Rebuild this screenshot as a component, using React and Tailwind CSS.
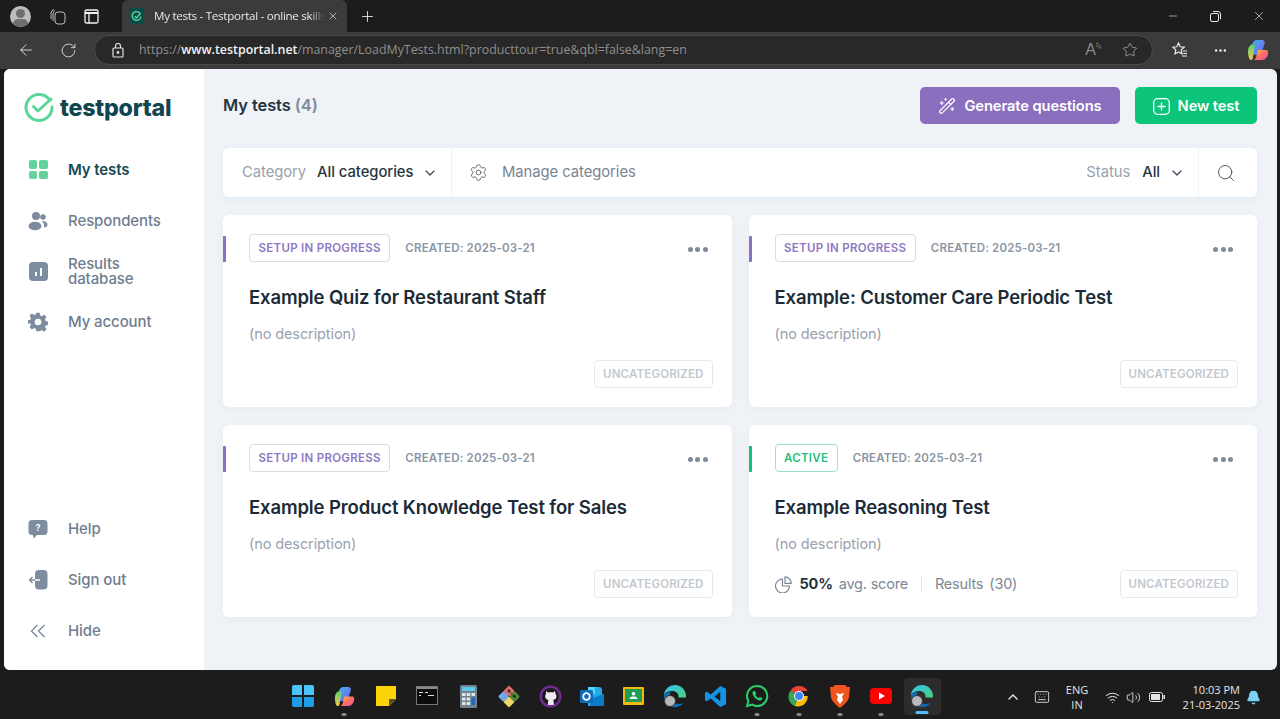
import React from "react";
import { ChevronDown, Search, Settings, Plus, ArrowLeft, RotateCw, Star, MoreHorizontal, X, Minus, WandSparkles, ChevronUp, Wifi, Volume2, Bell, Keyboard } from "lucide-react";

const Tile = ({ children, w = 30 }) => (
  <div className="flex items-center justify-center shrink-0 h-[30px]" style={{ width: w }}>{children}</div>
);

function Dot({ on }) {
  return <div className={on ? "absolute bottom-[1px] left-1/2 -translate-x-1/2 w-[5px] h-[3px] rounded bg-[#8a8a8a]" : "hidden"} />;
}

function CopilotIcon({ size = 24 }) {
  return (
    <svg width={size} height={size} viewBox="0 0 24 24">
      <defs>
        <linearGradient id="cpa" x1="0" y1="0" x2="1" y2="1"><stop offset="0" stopColor="#3fb4f0" /><stop offset="1" stopColor="#7c5ce8" /></linearGradient>
        <linearGradient id="cpb" x1="0" y1="0" x2="1" y2="1"><stop offset="0" stopColor="#ffc53d" /><stop offset="0.5" stopColor="#ff6f61" /><stop offset="1" stopColor="#e84fb0" /></linearGradient>
        <linearGradient id="cpc" x1="0" y1="0" x2="0" y2="1"><stop offset="0" stopColor="#52d273" /><stop offset="1" stopColor="#f7c948" /></linearGradient>
      </defs>
      <path d="M6 7c.6-3 2.500-5 5-5h5c2 0 3 1.600 2.600 3.400L15 17H9.500C6 17 5 13 6 7z" fill="url(#cpa)" />
      <path d="M2 13c0-3 1.500-6 4-6.600L9 7 7 19c-.3 2-1 3-2 3-2 0-3-5-3-9z" fill="url(#cpc)" />
      <path d="M12 12h8c2 0 2.500 2 2 4-.8 3.500-3 6-6 6H8c1.500-1 2.200-2.500 2.600-4.500z" fill="url(#cpb)" />
    </svg>
  );
}

function EdgeIcon({ avatar }) {
  return (
    <div className="relative w-[24px] h-[24px]">
      <svg width="24" height="24" viewBox="0 0 24 24">
        <defs>
          <linearGradient id="eg1" x1="0" y1="0" x2="1" y2="1"><stop offset="0" stopColor="#35c1f1" /><stop offset="1" stopColor="#46d27a" /></linearGradient>
        </defs>
        <path d="M12 1C6 1 1.500 5.500 1 11c2-3 5.500-4.500 9-4 3.500.4 6 3 5.500 6.500H23c.5-7-4.500-12.500-11-12.500z" fill="url(#eg1)" />
        <path d="M1 11c-.5 6 3 11 9 12 4 .6 8-.7 11-4-4 1.500-9 1.500-12-1.500C6 15 6 11 8 8 5 7.800 2.500 9 1 11z" fill="#0c6cb8" />
      </svg>
      {avatar && <div className="absolute left-[1px] bottom-[1px] w-[12px] h-[12px] rounded-full bg-[#b9b9b9] border border-[#333]" />}
    </div>
  );
}

function TaskIcons() {
  return (
    <div className="flex items-center gap-[11.3px] h-full">
      <Tile>
        <div className="grid grid-cols-2 gap-[1.500px] w-[22px] h-[22px]">
          <div className="bg-[#4cc2ff] rounded-tl-[2px]" /><div className="bg-[#4cc2ff] rounded-tr-[2px]" /><div className="bg-[#1e9de6] rounded-bl-[2px]" /><div className="bg-[#1e9de6] rounded-br-[2px]" />
        </div>
      </Tile>
      <div className="relative h-full flex items-center"><Tile><CopilotIcon size={23} /></Tile><Dot on /></div>
      <Tile>
        <svg width="22" height="22" viewBox="0 0 22 22"><path d="M1 1h20v13l-7 7H1z" fill="#fdd40a" /><path d="M21 14h-7v7z" fill="#5e5320" /></svg>
      </Tile>
      <Tile>
        <svg width="22" height="20" viewBox="0 0 22 20"><rect x="0.500" y="0.500" width="21" height="18" fill="#0c0c0c" stroke="#777" /><rect x="1" y="1" width="20" height="2" fill="#8a8a8a" /><path d="M3 6h4v1H3zM9 6h3v1H9zM3 9h2v1H3zM12 9h6v1h-6z" fill="#ddd" /></svg>
      </Tile>
      <Tile>
        <svg width="17" height="23" viewBox="0 0 17 23"><rect width="17" height="23" rx="1.500" fill="#70818f" /><rect x="2" y="2" width="13" height="4" fill="#5cc8ea" /><g fill="#dfe6ea"><rect x="2" y="8" width="3.500" height="3" /><rect x="6.700" y="8" width="3.500" height="3" /><rect x="2" y="12.500" width="3.500" height="3" /><rect x="6.700" y="12.500" width="3.500" height="3" /><rect x="2" y="17" width="3.500" height="3" /><rect x="6.700" y="17" width="3.500" height="3" /></g><rect x="11.500" y="12.500" width="3.500" height="7.500" fill="#1e6bb8" /><rect x="11.500" y="8" width="3.500" height="3" fill="#dfe6ea" /></svg>
      </Tile>
      <Tile>
        <svg width="24" height="24" viewBox="0 0 24 24"><rect x="2.500" y="8.500" width="8" height="8" rx="1.500" transform="rotate(45 6.500 12.500)" fill="#6ea8e8" /><rect x="8" y="14" width="8" height="8" rx="1.500" transform="rotate(45 12 18)" fill="#f0d667" /><rect x="13.500" y="8.500" width="8" height="8" rx="1.500" transform="rotate(45 17.500 12.500)" fill="#4f8a3a" /><rect x="8" y="3" width="8" height="8" rx="1.500" transform="rotate(45 12 7)" fill="#e06c6c" /><circle cx="12" cy="7" r="1.400" fill="#222" /><circle cx="17.500" cy="12.500" r="1.400" fill="#222" /><path d="M12 7l5.500 5.500" stroke="#222" strokeWidth=".8" /></svg>
      </Tile>
      <Tile>
        <svg width="23" height="23" viewBox="0 0 23 23"><circle cx="11.500" cy="11.500" r="11" fill="#6f2c91" /><circle cx="11.500" cy="11.500" r="8.500" fill="#1b1b1b" /><path d="M7 6l2 1.500c1.500-.4 3.500-.4 5 0L16 6l.6 3c.8 1 1 2.200.7 3.500-.4 1.500-1.800 2.300-3.300 2.500.5.500.7 1 .7 1.700V20H9v-3.300C9 16 9.200 15.500 9.700 15c-1.500-.2-3-1-3.300-2.500C6 11.200 6.300 10 7 9z" fill="#f3eaf7" /></svg>
      </Tile>
      <Tile>
        <svg width="24" height="24" viewBox="0 0 24 24"><path d="M8 3h11a3 3 0 013 3v4l2 1.500V20a2 2 0 01-2 2H8z" fill="#28a8ea" /><path d="M8 3h7v7H8z" fill="#50d9ff" /><path d="M12 14l12-4v10a2 2 0 01-2 2H10z" fill="#0a7dc9" /><rect x="0" y="6" width="13" height="13" rx="1.500" fill="#0f6cbd" /><circle cx="6.500" cy="12.500" r="3.300" fill="none" stroke="#fff" strokeWidth="1.800" /></svg>
      </Tile>
      <Tile>
        <svg width="21" height="18" viewBox="0 0 21 18"><rect width="21" height="18" rx="1" fill="#f2b90f" /><rect x="2" y="2" width="17" height="13" fill="#1f9d55" /><circle cx="10.500" cy="6.800" r="1.800" fill="#fff" /><path d="M6.500 12c.5-2 2-2.500 4-2.500s3.500.5 4 2.500z" fill="#fff" /></svg>
      </Tile>
      <Tile><EdgeIcon avatar /></Tile>
      <Tile>
        <svg width="23" height="23" viewBox="0 0 24 24"><path d="M17 1l6 3v16l-6 3L7 14l-4 3-2-1V8l2-1 4 3zM17 7l-6 5 6 5z" fill="#1492e6" /></svg>
      </Tile>
      <div className="relative h-full flex items-center"><Tile>
        <svg width="24" height="24" viewBox="0 0 24 24" fill="none"><path d="M12 2a10 10 0 00-8.600 15L2 22l5.200-1.400A10 10 0 1012 2z" stroke="#25d366" strokeWidth="2" /><path d="M8.500 7c-1 .8-1.300 2-.7 3.500 1 2.500 3.200 4.700 5.700 5.700 1.500.6 2.700.3 3.500-.7l.5-1.300-2.700-1.300-1 1.200c-1.500-.6-2.800-1.900-3.500-3.400l1-1L10 7z" fill="#25d366" /></svg>
      </Tile><Dot on /></div>
      <div className="relative h-full flex items-center"><Tile>
        <svg width="24" height="24" viewBox="0 0 24 24"><path d="M12 12L3.300 7A10 10 0 0120.700 7H12z" fill="#ea4335" /><path d="M12 12l-4.300 10A10 10 0 013.300 7z" fill="#34a853" /><path d="M12 12h8.700a10 10 0 01-13 10z" fill="#fbbc05" /><circle cx="12" cy="12" r="5" fill="#fff" /><circle cx="12" cy="12" r="4" fill="#4285f4" /></svg>
      </Tile><Dot on /></div>
      <div className="relative h-full flex items-center"><Tile>
        <svg width="22" height="25" viewBox="0 0 22 25"><path d="M6 1h10l2 2 3 0-1 10c-.5 4-6 9-9 11-3-2-8.500-7-9-11L1 3h3z" fill="#f1541e" /><path d="M7 9l4 1 4-1-2 4 1 3-3 4-3-4 1-3z" fill="#fff" /></svg>
      </Tile><Dot on /></div>
      <div className="relative h-full flex items-center"><Tile>
        <svg width="22" height="16" viewBox="0 0 22 16"><rect width="22" height="16" rx="4" fill="#f00" /><path d="M9 4.500v7l6-3.500z" fill="#fff" /></svg>
      </Tile><Dot on /></div>
      <div className="relative w-[37px] h-[37px] -mx-[3.500px] rounded bg-[#2c2c2c] flex items-center justify-center">
        <EdgeIcon avatar />
        <div className="absolute bottom-[1px] left-1/2 -translate-x-1/2 w-[13px] h-[3px] rounded bg-[#4cc2ff]" />
      </div>
    </div>
  );
}

function Tray() {
  return (
    <div className="flex items-center h-full text-[#e6e6e6] font-['Open_Sans',sans-serif]">
      <ChevronUp size={16} strokeWidth={2} className="ml-[1px]" />
      <Keyboard size={16} strokeWidth={1.300} className="ml-[13px]" />
      <div className="w-[30px] ml-[12px] text-center text-[11px] leading-[15px]">ENG<br />IN</div>
      <Wifi size={15} strokeWidth={1.600} className="ml-[13px]" />
      <Volume2 size={15} strokeWidth={1.400} className="ml-[6px]" />
      <svg width="16" height="10" viewBox="0 0 16 10" className="ml-[8px]"><rect x="0.500" y="0.500" width="13" height="9" rx="2" fill="none" stroke="#e6e6e6" /><rect x="2" y="2" width="9" height="6" fill="#e6e6e6" /><rect x="14.500" y="3" width="1.500" height="4" fill="#e6e6e6" /></svg>
      <div className="ml-[9px] w-[66px] text-right text-[11px] leading-[15px] whitespace-nowrap">10:03 PM<br />21-03-2025</div>
      <Bell size={15} fill="#7ed0f5" stroke="#7ed0f5" className="ml-[6px]" />
    </div>
  );
}

function NavIcon({ kind }) {
  const c = "#7e8ca0";
  if (kind === "grid") return (
    <div className="grid grid-cols-2 gap-[2px] w-[19px] h-[19px]">
      {[0, 1, 2, 3].map((i) => <div key={i} className="bg-[#62d39a] rounded-[2px]" />)}
    </div>
  );
  if (kind === "people") return (
    <svg width="20" height="20" viewBox="0 0 20 20" fill={c}><circle cx="8" cy="5" r="4" /><circle cx="15" cy="6" r="2.800" /><ellipse cx="7" cy="15" rx="6.500" ry="4.300" /><path d="M14 10c3 0 5.500 1.500 5.500 4 0 1.500-1.500 2.500-3.500 2.500 .5-2.500-.5-5-2-6.500z" /></svg>
  );
  if (kind === "chart") return (
    <svg width="19" height="19" viewBox="0 0 19 19"><rect width="19" height="19" rx="4" fill={c} /><rect x="6" y="10" width="2" height="4" fill="#fff" /><rect x="11" y="6" width="2" height="8" fill="#fff" /></svg>
  );
  if (kind === "gear") return (
    <svg width="20" height="20" viewBox="0 0 24 24" fill={c}><path fillRule="evenodd" d="M10 1h4l.7 3.200 1.900.8 2.800-1.800 2.800 2.800-1.800 2.800.8 1.900 3.100.7v4l-3.100.7-.8 1.900 1.800 2.800-2.800 2.800-2.800-1.800-1.900.8L14 23h-4l-.7-3.100-1.900-.8-2.800 1.800-2.800-2.800 1.800-2.800-.8-1.900L0 14v-4l2.800-.7.8-1.900-1.800-2.800 2.800-2.800 2.800 1.800 1.900-.8zM12 8a4 4 0 100 8 4 4 0 000-8z" /></svg>
  );
  if (kind === "help") return (
    <svg width="20" height="20" viewBox="0 0 20 20"><path d="M4 1h12a3.500 3.500 0 013.500 3.500v8A3.500 3.500 0 0116 16H9l-3.500 3.500L5 16H4A3.500 3.500 0 01.500 12.500v-8A3.500 3.500 0 014 1z" fill={c} /><text x="10" y="12" textAnchor="middle" fontSize="9" fontWeight="700" fill="#fff" fontFamily="Inter">?</text></svg>
  );
  if (kind === "out") return (
    <svg width="20" height="20" viewBox="0 0 20 20"><rect x="7" y="0" width="12.500" height="19.500" rx="4" fill={c} /><path d="M12 10H1.500M4.500 7l-3 3 3 3" fill="none" stroke={c} strokeWidth="1.400" /><path d="M7 10h5" stroke="#fff" strokeWidth="1.400" /></svg>
  );
  return (
    <svg width="16" height="14" viewBox="0 0 16 14" fill="none" stroke={c} strokeWidth="1.400"><path d="M7.500 1L1.500 7l6 6M14.500 1l-6 6 6 6" /></svg>
  );
}

function NavItem({ icon, active, short, children }) {
  return (
    <div className={(short ? "h-[50px]" : "h-[51px]") + " flex items-center"}>
      <div className="w-[64px] flex justify-center shrink-0 pl-[5px] pr-[1px]"><div className="w-[20px] flex justify-center"><NavIcon kind={icon} /></div></div>
      <div className={"text-[15px] leading-[15px] tracking-[-0.1px] " + (active ? "font-semibold text-[#174a54]" : "font-medium text-[#6f7d90]")}>{children}</div>
    </div>
  );
}

function Sidebar() {
  return (
    <aside className="w-[200px] shrink-0 bg-white flex flex-col pb-[14px]">
      <div className="h-[75px] pt-[23px] pl-[20px] flex items-start gap-[6px]">
        <svg width="30" height="30" viewBox="0 0 30 30" fill="none" className="shrink-0">
          <path d="M26 8.500A13 13 0 1028 15" stroke="#5cd598" strokeWidth="3" strokeLinecap="round" />
          <path d="M9.500 14.500l4.500 4.500L27 7" stroke="#5cd598" strokeWidth="3" strokeLinecap="round" strokeLinejoin="round" />
        </svg>
        <span className="font-['Inter',sans-serif] font-extrabold text-[23.200px] leading-[30px] text-[#0f4650] tracking-[-0.2px] pt-[1px]">testportal</span>
      </div>
      <NavItem icon="grid" active>My tests</NavItem>
      <NavItem icon="people">Respondents</NavItem>
      <NavItem icon="chart" short>Results<br />database</NavItem>
      <NavItem icon="gear">My account</NavItem>
      <div className="flex-1" />
      <NavItem icon="help">Help</NavItem>
      <NavItem icon="out">Sign out</NavItem>
      <NavItem icon="hide">Hide</NavItem>
    </aside>
  );
}

function Card({ title, active, stats }) {
  return (
    <div className="relative bg-white rounded-[6px] h-[192px] px-[26px] pt-[19px] shadow-[0_2px_8px_rgba(120,140,160,0.06)]">
      <div className={"absolute left-0 top-[21px] w-[3px] h-[26px] rounded-r-[1px] " + (active ? "bg-[#12c07c]" : "bg-[#8b71bf]")} />
      <div className="flex items-center h-[28px]">
        <div className={"h-[28px] pt-[1px] px-[8.500px] flex items-center rounded-[4px] border text-[11.500px] font-semibold tracking-[0.29px] " + (active ? "border-[#9fe3c6] text-[#1fbf80]" : "border-[#d9dbe6] text-[#8e78c2]")}>
          {active ? "ACTIVE" : "SETUP IN PROGRESS"}
        </div>
        <div className="ml-[15px] pt-[1px] text-[11.500px] font-semibold tracking-[0.17px] text-[#8a95a3]">CREATED: 2025-03-21</div>
        <div className="flex-1" />
        <div className="flex gap-[2.500px] mr-[-2px] translate-y-[1px]">
          <span className="w-[5px] h-[5px] rounded-full bg-[#7f8a9a]" /><span className="w-[5px] h-[5px] rounded-full bg-[#7f8a9a]" /><span className="w-[5px] h-[5px] rounded-full bg-[#7f8a9a]" />
        </div>
      </div>
      <div className="mt-[21px] text-[18.500px] leading-[28px] font-semibold text-[#1c2b36] tracking-[-0.13px]">{title}</div>
      <div className="mt-[13px] text-[14.500px] leading-[20px] text-[#98a1ae] tracking-[-0.1px]">(no description)</div>
      <div className="absolute left-[26px] right-[19px] bottom-[19px] h-[28px] flex items-center">
        {stats && (
          <div className="flex items-center text-[14.500px] text-[#7d8896] tracking-[-0.2px]">
            <svg width="17" height="17" viewBox="0 0 17 17" fill="none" stroke="#7d8896" strokeWidth="1.200"><path d="M7.500 3a7 7 0 107 7H7.500z" /><path d="M10 .8a6.500 6.500 0 016.200 6.500H10z" /></svg>
            <span className="ml-[8px] font-bold text-[#25333e]">50%</span>
            <span className="ml-[6px]">avg. score</span>
            <span className="ml-[13px] w-px h-[16px] bg-[#e5e9ee]" />
            <span className="ml-[13px]">Results</span>
            <span className="ml-[6px]">(30)</span>
          </div>
        )}
        <div className="flex-1" />
        <div className="h-[28px] pt-[2px] px-[8px] flex items-center rounded-[4px] border border-[#e6e9ed] text-[11.500px] font-semibold tracking-[0.17px] text-[#c2c8cf]">UNCATEGORIZED</div>
      </div>
    </div>
  );
}

export default function App() {
  return (
    <div className="w-[1280px] h-[719px] overflow-hidden flex flex-col bg-[#1c1c1c] font-['Inter',sans-serif]">
      {/* tab strip */}
      <div className="h-[32px] shrink-0 bg-[#1c1c1c] flex items-end font-['Open_Sans',sans-serif]">
        <div className="w-[122px] h-full flex items-center">
          <div className="ml-[10px] w-[21px] h-[21px] rounded-full bg-[#bdbdbd] relative overflow-hidden">
            <div className="absolute left-[6px] top-[3px] w-[9px] h-[9px] rounded-full bg-[#6e6e6e]" />
            <div className="absolute left-[3px] top-[13px] w-[15px] h-[10px] rounded-full bg-[#6e6e6e]" />
          </div>
          <svg width="16" height="17" viewBox="0 0 16 17" fill="none" stroke="#bdbdbd" strokeWidth="1" className="ml-[19px]">
            <rect x="5" y="4" width="10" height="12" rx="3" /><path d="M3 13V6a4 4 0 012-3.500M1 11V5a4 4 0 013-3.500" />
          </svg>
          <svg width="15" height="15" viewBox="0 0 15 15" fill="none" stroke="#f2f2f2" strokeWidth="1.300" className="ml-[18px]">
            <rect x="1" y="1" width="13" height="13" rx="1.500" /><path d="M1 4h13" strokeWidth="2" /><path d="M5 4v10" />
          </svg>
        </div>
        <div className="relative w-[225px] h-[32px] bg-[#3b3b3b] rounded-t-[6px] flex items-center pl-[7px] shrink-0">
          <div className="w-[15px] h-[16px] rounded-[2px] bg-[#0d4a4a] flex items-center justify-center">
            <svg width="11" height="11" viewBox="0 0 10 10" fill="none" stroke="#5cd598" strokeWidth="1.200"><path d="M8.500 2.500A4 4 0 109 5" /><path d="M3.200 4.800l1.600 1.600L8.800 2" /></svg>
          </div>
          <div className="ml-[10px] w-[170px] overflow-hidden whitespace-nowrap text-[11.600px] text-[#e8e8e8] tracking-[-0.28px] [mask-image:linear-gradient(to_right,black_92%,transparent)]">My tests - Testportal - online skills test</div>
          <X size={12} strokeWidth={1.500} className="absolute right-[8px] text-[#d8d8d8]" />
        </div>
        <div className="h-full flex items-center ml-[12px]"><Plus size={17} strokeWidth={1.200} className="text-[#f2f2f2]" /></div>
        <div className="flex-1" />
        <div className="h-full flex items-center text-[#e8e8e8]">
          <Minus size={12} strokeWidth={1.200} />
          <svg width="11" height="11" viewBox="0 0 11 11" fill="none" stroke="#e8e8e8" strokeWidth="1" className="ml-[31px]"><rect x="0.500" y="2.500" width="8" height="8" rx="1.500" /><path d="M3 .5h5a2.500 2.500 0 012.500 2.500v5" /></svg>
          <X size={14} strokeWidth={1.200} className="ml-[31px] mr-[14px]" />
        </div>
      </div>
      {/* toolbar */}
      <div className="h-[37px] shrink-0 bg-[#3b3b3b] flex items-center text-[#e4e4e4] pb-[1px]">
        <ArrowLeft size={18} strokeWidth={1.200} className="ml-[17px]" />
        <RotateCw size={17} strokeWidth={1.200} className="ml-[25px]" />
        <div className="ml-[17px] w-[1059px] h-[30px] rounded-full bg-[#282828] border border-[#4a4a4a] flex items-center font-['Open_Sans',sans-serif]">
          <svg width="14" height="15" viewBox="0 0 14 15" fill="none" stroke="#e2e2e2" strokeWidth="1.200" className="ml-[16px]"><rect x="2" y="5" width="10" height="9" rx="1" /><path d="M4.500 5V3a2.500 2.500 0 015 0v2" /><circle cx="7" cy="9.500" r=".8" fill="#e2e2e2" /></svg>
          <div className="ml-[14px] pt-[1px] text-[12.400px] text-[#8f8f8f] whitespace-nowrap">https://<span className="text-[#f2f2f2] font-semibold">www.testportal.net</span>/manager/LoadMyTests.html?producttour=true&amp;qbl=false&amp;lang=en</div>
          <div className="flex-1" />
          <span className="text-[#8a8a8a] text-[16px] font-['Liberation_Sans',sans-serif]">A</span>
          <svg width="6" height="10" viewBox="0 0 6 10" fill="none" stroke="#8a8a8a" strokeWidth=".9" className="mb-[6px]"><path d="M0 1c3 1 4.500 3 4.500 5.500M0 3.500c1.500.5 2.300 1.500 2.300 3" /></svg>
          <Star size={16} strokeWidth={1.200} className="ml-[20px] mr-[14px] text-[#a8a8a8]" />
        </div>
        <svg width="16" height="16" viewBox="0 0 16 16" fill="none" stroke="#f0f0f0" strokeWidth="1.200" className="ml-[19px]"><path d="M6.500 1l1.700 3.800 4 .4-3 2.700.8 4-3.500-2-3.500 2 .8-4-3-2.700 4-.4z" /><path d="M11 9h4M11.500 11.500h3.500M10 14h5" /></svg>
        <MoreHorizontal size={15} strokeWidth={2} className="ml-[25px] text-[#f0f0f0]" />
        <div className="ml-[18px]"><CopilotIcon size={24} /></div>
      </div>
      {/* page */}
      <div className="h-[601px] shrink-0 ml-[4px] mr-[3px] bg-[#eff3f7] rounded-[6px] overflow-hidden flex">
        <Sidebar />
        <main className="flex-1 pl-[19px] pr-[20px] pt-[18px]">
          <div className="h-[37px] flex items-center">
            <div className="text-[16.500px] font-semibold text-[#25343f] tracking-[-0.1px]">My tests <span className="text-[#7e8a99]">(4)</span></div>
            <div className="flex-1" />
            <button className="w-[200px] h-[37px] pt-[1px] rounded-[5px] bg-[#8a6fbf] text-white flex items-center justify-center gap-[8px] text-[14.700px] font-semibold tracking-[-0.1px]">
              <WandSparkles size={18} strokeWidth={1.500} />Generate questions
            </button>
            <button className="ml-[15px] w-[122px] h-[37px] pt-[1px] rounded-[5px] bg-[#0cc47a] text-white flex items-center justify-center gap-[8px] text-[14.700px] font-semibold tracking-[-0.1px]">
              <svg width="17" height="17" viewBox="0 0 17 17" fill="none" stroke="#fff" strokeWidth="1.300"><rect x="0.700" y="0.700" width="15.600" height="15.600" rx="4" /><path d="M8.500 4.500v8M4.500 8.500h8" /></svg>
              New test
            </button>
          </div>
          <div className="mt-[24px] h-[49px] bg-white rounded-[6px] flex items-center shadow-[0_3px_10px_rgba(120,140,160,0.07)] text-[14.800px] tracking-[-0.05px]">
            <div className="w-[229px] h-full flex items-center pl-[19px] border-r border-[#f0f3f6]">
              <span className="text-[#98a1ae]">Category</span>
              <span className="ml-[11px] font-medium text-[#25333e]">All categories</span>
              <ChevronDown size={16} strokeWidth={1.800} className="ml-[9px] text-[#3a4654]" />
            </div>
            <Settings size={19} strokeWidth={1.200} className="ml-[17px] text-[#5c6875]" />
            <span className="ml-[14px] text-[#7a8593]">Manage categories</span>
            <div className="flex-1" />
            <span className="text-[#98a1ae]">Status</span>
            <span className="ml-[12px] font-medium text-[#25333e]">All</span>
            <ChevronDown size={16} strokeWidth={1.800} className="ml-[9px] text-[#3a4654]" />
            <div className="ml-[13px] w-[59px] h-full flex items-center justify-center border-l border-[#f0f3f6] pr-[4px]">
              <Search size={20} strokeWidth={1.200} className="text-[#4d5966]" />
            </div>
          </div>
          <div className="mt-[18px] grid grid-cols-2 gap-x-[17px] gap-y-[18px]">
            <Card title="Example Quiz for Restaurant Staff" />
            <Card title="Example: Customer Care Periodic Test" />
            <Card title="Example Product Knowledge Test for Sales" />
            <Card title="Example Reasoning Test" active stats />
          </div>
        </main>
      </div>
      {/* taskbar */}
      <div className="mt-[5px] h-[44px] flex items-center relative pl-[288px] pb-[2px]">
        <TaskIcons />
        <div className="absolute left-[1004px] top-0 h-full"><Tray /></div>
      </div>
    </div>
  );
}
